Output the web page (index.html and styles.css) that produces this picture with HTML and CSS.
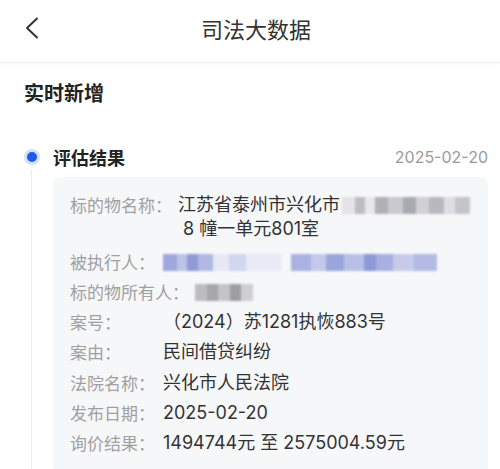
FILE: index.html
```html
<!DOCTYPE html>
<html lang="zh-CN">
  <head>
    <meta charset="UTF-8" />
    <meta name="viewport" content="width=device-width, initial-scale=1.0" />
    <title>司法大数据</title>
    <link rel="stylesheet" href="styles.css">
  </head>
  <body>
    <header class="topbar">
      <a class="back" href="#">
        <svg width="14" height="22" viewBox="0 0 14 22">
          <polyline points="12,1.5 2,11 12,20.5" fill="none" stroke="#333" stroke-width="2" stroke-linecap="round" stroke-linejoin="round" />
        </svg>
      </a>
      <h1 class="title">司法大数据</h1>
      <span></span>
    </header>

    <section class="feed">
      <h2 class="feed-title">实时新增</h2>

      <div class="item">
        <div class="rail">
          <span class="dot"></span>
          <span class="line"></span>
        </div>
        <div class="item-body">
          <div class="item-head">
            <span class="item-name">评估结果</span>
            <span class="item-date">2025-02-20</span>
          </div>
          <div class="card">
            <div class="row first">
              <span class="label">标的物名称：</span>
              <span class="value">江苏省泰州市兴化市<span class="mosaic m-addr"></span><br>&nbsp;8 幢一单元801室</span>
            </div>
            <div class="row">
              <span class="label">被执行人：</span>
              <span class="value"><span class="mosaic m-name1"></span><span class="mosaic m-name2"></span></span>
            </div>
            <div class="row">
              <span class="label">标的物所有人：</span>
              <span class="value"><span class="mosaic m-owner"></span></span>
            </div>
            <div class="row">
              <span class="label">案号：</span>
              <span class="value">（2024）苏1281执恢883号</span>
            </div>
            <div class="row">
              <span class="label">案由：</span>
              <span class="value">民间借贷纠纷</span>
            </div>
            <div class="row">
              <span class="label">法院名称：</span>
              <span class="value">兴化市人民法院</span>
            </div>
            <div class="row">
              <span class="label">发布日期：</span>
              <span class="value">2025-02-20</span>
            </div>
            <div class="row">
              <span class="label">询价结果：</span>
              <span class="value">1494744元 至 2575004.59元</span>
            </div>
          </div>
        </div>
      </div>
    </section>
  </body>
</html>
```

FILE: styles.css
```css
body {
  font-family: "Noto Sans CJK SC", "Noto Sans", sans-serif;
  background-color: #fff;
  color: #333;
  margin: 0;
  padding: 0;
  overflow: hidden;
}

.topbar {
  display: grid;
  grid-template-columns: 56px 1fr 44px;
  align-items: center;
  height: 62px;
  border-bottom: 1px solid #f0f0f0;
  box-shadow: 0 1px 2px rgba(0, 0, 0, 0.03);
}

.topbar .back {
  display: flex;
  margin-left: 25px;
  margin-top: -6px;
}

.topbar .title {
  margin: 0;
  margin-top: -7px;
  text-align: center;
  font-size: 22px;
  font-weight: normal;
  color: #333;
}

.feed-title {
  margin: 16px 0 0 24px;
  font-size: 20px;
  line-height: 28px;
  font-weight: bold;
  color: #222;
}

.item {
  display: flex;
  margin-top: 37px;
}

.rail {
  width: 53px;
  display: flex;
  flex-direction: column;
  align-items: center;
  padding-left: 10px;
  box-sizing: border-box;
}

.dot {
  width: 10px;
  height: 10px;
  margin-top: 8px;
  border-radius: 50%;
  background: #1f5ae8;
  box-shadow: 0 0 0 3px #d3e0fb;
}

.line {
  flex: 1;
  width: 1px;
  margin-top: 8px;
  background: #ececec;
}

.item-body {
  flex: 1;
  margin-right: 12px;
}

.item-head {
  display: flex;
  justify-content: space-between;
  align-items: center;
  height: 26px;
}

.item-name {
  font-size: 18px;
  font-weight: bold;
  color: #222;
}

.item-date {
  font-family: "Inter", "Noto Sans", sans-serif;
  font-size: 16px;
  color: #9a9a9a;
}

.card {
  margin-top: 7px;
  background: #f6f7f9;
  border-radius: 8px;
  padding: 12px 16px 20px 17px;
}

.row {
  display: flex;
  font-size: 17px;
  line-height: 24px;
  margin-top: 6.3px;
}

.row.first {
  margin-top: 4px;
  margin-bottom: 8.5px;
}

.label {
  min-width: 87px;
  margin-right: 6px;
  color: #a0a0a0;
  white-space: nowrap;
}

.value {
  font-family: "Inter", "Noto Sans CJK SC", sans-serif;
  font-size: 18px;
  color: #333;
}

.mosaic {
  display: inline-block;
  height: 17px;
  vertical-align: -3px;
  filter: blur(1.2px);
}

.m-addr {
  width: 128px;
  margin-left: 2px;
  background: linear-gradient(90deg, #e4e4e6 0 10%, #bdbdc2 10% 18%, #e8e8ea 18% 26%, #b0b0b6 26% 36%, #c9c9ce 36% 48%, #a9a9b0 48% 58%, #d0d0d5 58% 68%, #b8b8be 68% 80%, #dedee2 80% 88%, #c4c4ca 88% 100%);
}

.m-name1 {
  width: 118px;
  background: linear-gradient(90deg, #9ea8dc 0 12%, #bcc3e8 12% 20%, #8f9bd6 20% 30%, #b0b8e4 30% 42%, #e6e8f4 42% 56%, #d2d6ee 56% 70%, #e8eaf5 70% 100%);
}

.m-name2 {
  width: 146px;
  margin-left: 10px;
  background: linear-gradient(90deg, #aab2e2 0 14%, #c3c9ea 14% 24%, #9aa5dc 24% 36%, #b9c0e6 36% 50%, #8e9ad6 50% 58%, #a7b0e0 58% 70%, #c6cbea 70% 84%, #b3bae4 84% 100%);
}

.m-owner {
  width: 58px;
  background: linear-gradient(90deg, #bdbdc0 0 20%, #a7a7ab 20% 40%, #c4c4c7 40% 60%, #9e9ea3 60% 80%, #cfcfd2 80% 100%);
}
```
